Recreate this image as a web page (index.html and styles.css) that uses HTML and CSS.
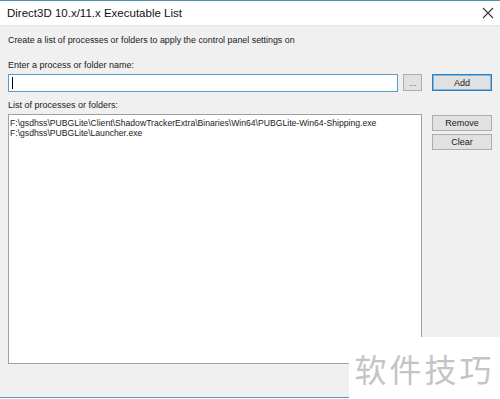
FILE: index.html
```html
<!DOCTYPE html>
<html lang="en">
<head>
  <meta charset="UTF-8">
  <title>Direct3D 10.x/11.x Executable List</title>
  <link rel="stylesheet" href="styles.css">
</head>
<body>
<div class="window">
  <div class="titlebar">
    <span class="title">Direct3D 10.x/11.x Executable List</span>
    <svg class="close" width="12" height="12" viewBox="0 0 12 12">
      <path d="M1 1 L11 11 M11 1 L1 11" stroke="#333" stroke-width="1.1" fill="none"/>
    </svg>
  </div>
  <div class="content">
    <p class="intro">Create a list of processes or folders to apply the control panel settings on</p>
    <label class="lbl">Enter a process or folder name:</label>
    <div class="row">
      <div class="field"><span class="caret"></span></div>
      <button class="btn dots">...</button>
      <button class="btn wide default">Add</button>
    </div>
    <label class="lbl list-lbl">List of processes or folders:</label>
    <div class="row list-row">
      <div class="listbox">
        <div>F:\gsdhss\PUBGLite\Client\ShadowTrackerExtra\Binaries\Win64\PUBGLite-Win64-Shipping.exe</div>
        <div>F:\gsdhss\PUBGLite\Launcher.exe</div>
      </div>
      <div class="side">
        <button class="btn wide">Remove</button>
        <button class="btn wide">Clear</button>
      </div>
    </div>
  </div>
</div>
<div class="mark">软件技巧</div>
</body>
</html>
```

FILE: styles.css
```css
body {
  margin: 0;
  width: 500px;
  height: 399px;
  overflow: hidden;
  position: relative;
  font-family: "Liberation Sans", Arial, sans-serif;
  font-size: 9px;
  color: #1a1a1a;
}
.window {
  height: 398px;
  background: #f0f0f0;
  border-top: 1px solid #4f8fb0;
  border-bottom: 1px solid #5d93b5;
  box-sizing: border-box;
}
.titlebar {
  height: 24px;
  background: #fff;
  display: flex;
  align-items: center;
  justify-content: space-between;
  padding: 0 6px 0 7px;
  border-bottom: 1px solid #e6e6e6;
}
.title {
  font-size: 11.5px;
  color: #111;
}
.content {
  padding: 9px 8px 0 8px;
}
.intro {
  margin: 0 0 15px 0;
  font-size: 8.9px;
}
.lbl {
  display: block;
  margin-bottom: 4px;
}
.row {
  display: flex;
  align-items: flex-start;
}
.field {
  width: 387px;
  height: 16px;
  background: #fff;
  border: 1px solid #5e9ac2;
  display: flex;
  align-items: center;
  padding-left: 3px;
  box-sizing: content-box;
}
.caret {
  width: 1px;
  height: 12px;
  background: #000;
}
.btn {
  font-family: "Liberation Sans", Arial, sans-serif;
  font-size: 9px;
  color: #1a1a1a;
  background: #e1e1e1;
  border: 1px solid #adadad;
  height: 17px;
  padding: 0;
}
.dots {
  width: 19px;
  margin-left: 5px;
  color: #666;
}
.wide {
  width: 60px;
  margin-left: 10px;
}
.default {
  border: 1px solid #2d7fbf;
  box-shadow: inset 0 0 0 1px #7fb7e0;
}
.list-lbl {
  margin-top: 8px;
}
.listbox {
  width: 413px;
  height: 242px;
  background: #fff;
  border: 1px solid #a0a0a0;
  padding: 3px 1px;
  box-sizing: content-box;
  line-height: 10px;
  font-size: 8.65px;
}
.side {
  display: flex;
  flex-direction: column;
  gap: 3px;
  padding-top: 1px;
}
.side .btn {
  height: 16px;
}
.mark {
  position: absolute;
  right: 0;
  bottom: 0;
  width: 151px;
  height: 62px;
  background: #fff;
  color: #c4c4c4;
  font-family: "Noto Sans CJK SC", sans-serif;
  font-size: 32px;
  display: flex;
  align-items: center;
  justify-content: center;
  letter-spacing: 3px;
}
```
